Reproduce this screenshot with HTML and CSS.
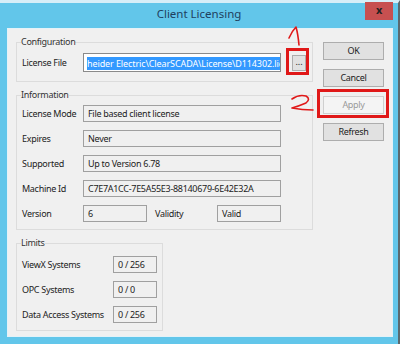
FILE: index.html
```html
<!DOCTYPE html>
<html>
<head>
    <title>Client Licensing</title>
    <link rel="stylesheet" href="styles.css">
</head>
<body>
<div class="window">
    <div class="titlebar">
        <span class="title">Client Licensing</span>
        <span class="close">x</span>
    </div>
    <div class="client">
        <div class="groups">
            <fieldset class="group config">
                <legend>Configuration</legend>
                <div class="row">
                    <span class="label">License File</span>
                    <span class="field wide file"><span class="selected">heider Electric\ClearSCADA\License\D114302.lic</span></span>
                    <span class="browse">...</span>
                </div>
            </fieldset>

            <fieldset class="group info">
                <legend>Information</legend>
                <div class="row">
                    <span class="label">License Mode</span>
                    <span class="field wide">File based client license</span>
                </div>
                <div class="row">
                    <span class="label">Expires</span>
                    <span class="field wide">Never</span>
                </div>
                <div class="row">
                    <span class="label">Supported</span>
                    <span class="field wide">Up to Version 6.78</span>
                </div>
                <div class="row">
                    <span class="label">Machine Id</span>
                    <span class="field wide">C7E7A1CC-7E5A55E3-88140679-6E42E32A</span>
                </div>
                <div class="row">
                    <span class="label">Version</span>
                    <span class="field short">6</span>
                    <span class="label validity">Validity</span>
                    <span class="field short">Valid</span>
                </div>
            </fieldset>

            <fieldset class="group limits">
                <legend>Limits</legend>
                <div class="row">
                    <span class="label lim">ViewX Systems</span>
                    <span class="field count">0 / 256</span>
                </div>
                <div class="row">
                    <span class="label lim">OPC Systems</span>
                    <span class="field count">0 / 0</span>
                </div>
                <div class="row">
                    <span class="label lim">Data Access Systems</span>
                    <span class="field count">0 / 256</span>
                </div>
            </fieldset>
        </div>

        <div class="buttons">
            <span class="button">OK</span>
            <span class="button">Cancel</span>
            <span class="button disabled">Apply</span>
            <span class="button">Refresh</span>
        </div>
    </div>

    <!-- red marker notes drawn over the dialog -->
    <svg class="notes" width="400" height="344" viewBox="0 0 400 344">
        <rect x="287.5" y="49.5" width="20" height="24" />
        <rect x="318.5" y="90.5" width="69" height="26" />
        <path d="M289 38 Q292 31 296 27 Q298 34 299 45" />
        <path d="M292 99 Q299 94 306 96 Q311 99 306 103 Q299 106 292 108 Q302 110 313 110" />
    </svg>
</div>
</body>
</html>
```

FILE: styles.css
```css
BODY {
    margin : 0;
    font-family : "Noto Sans", "Open Sans", sans-serif;
    font-size : 9px;
    letter-spacing : -0.3px;
    color : #222;
}
.window {
    position : relative;
    width : 400px;
    height : 344px;
    background : #62c6ea;
    border-top : 3px solid #d6eef8;
    border-right : 2px solid #5a6a70;
    box-sizing : border-box;
    display : flex;
    flex-direction : column;
}
.titlebar {
    height : 25px;
    display : flex;
    justify-content : center;
    align-items : center;
    position : relative;
}
.title {
    font-size : 11.5px;
    letter-spacing : 0;
    color : #20405e;
    margin-top : -4px;
}
.close {
    position : absolute;
    right : 5px;
    top : -1px;
    width : 28px;
    height : 18px;
    background : #c75050;
    color : #222;
    font-weight : bold;
    font-size : 11px;
    text-align : center;
    line-height : 16px;
}
.client {
    flex : 1;
    margin : 0 5px 7px 7px;
    background : #f0f0f0;
    border : 1px solid #e4f2f8;
    display : flex;
    padding : 7px 0 0 8px;
}
.groups {
    width : 297px;
    display : flex;
    flex-direction : column;
    gap : 7px;
}
.group {
    margin : 0;
    border : 1px solid #dcdcdc;
    padding : 5px 0 7px 5px;
    display : flex;
    flex-direction : column;
    gap : 8px;
}
.group legend {
    padding : 0;
    margin-left : -1px;
    line-height : 12px;
    color : #333;
}
.config {
    padding-top : 6px;
    padding-bottom : 10px;
}
.info {
    padding-top : 4px;
}
.limits {
    width : 147px;
    box-sizing : border-box;
    padding-top : 7px;
}
.row {
    display : flex;
    align-items : center;
    height : 17px;
}
.label {
    width : 61px;
    flex : none;
    white-space : nowrap;
}
.label.lim {
    width : 91px;
}
.label.validity {
    width : 62px;
    margin-left : 8px;
}
.field {
    height : 17px;
    box-sizing : border-box;
    border : 1px solid #a0a0a0;
    background : #f0f0f0;
    padding : 0 4px;
    line-height : 15px;
    white-space : nowrap;
    overflow : hidden;
}
.field.wide {
    width : 198px;
}
.field.short {
    width : 64px;
}
.field.count {
    width : 44px;
}
.field.file {
    height : 19px;
    background : #fff;
    border-color : #8a8a8a;
    padding : 2px 0 0 3px;
}
.selected {
    background : #3399ff;
    color : #fff;
    display : inline-block;
    line-height : 13px;
    letter-spacing : -0.1px;
}
.browse {
    margin-left : 11px;
    width : 14px;
    height : 16px;
    box-sizing : border-box;
    border : 1px solid #adadad;
    background : #e1e1e1;
    text-align : center;
    line-height : 12px;
    letter-spacing : 0;
}
.buttons {
    margin-left : 10px;
    padding-top : 6px;
    display : flex;
    flex-direction : column;
    gap : 9px;
}
.button {
    width : 61px;
    height : 18px;
    box-sizing : border-box;
    border : 1px solid #adadad;
    background : #e1e1e1;
    text-align : center;
    line-height : 16px;
}
.button.disabled {
    background : #f4f4f4;
    border-color : #cfcfcf;
    color : #9a9a9a;
}
.notes {
    position : absolute;
    left : 0;
    top : -3px;
    fill : none;
    stroke : #e01818;
}
.notes rect {
    stroke-width : 3;
}
.notes path {
    stroke-width : 1.6;
    stroke-linecap : round;
    stroke-linejoin : round;
}
```
